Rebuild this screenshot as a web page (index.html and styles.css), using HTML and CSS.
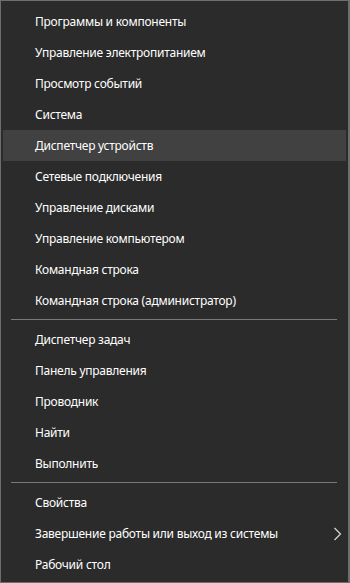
FILE: index.html
```html
<!DOCTYPE html>
<html lang="ru">
<head>
<meta charset="utf-8">
<link rel="stylesheet" href="styles.css">
</head>
<body>
<div class="menu">
  <div class="item">Программы и компоненты</div>
  <div class="item">Управление электропитанием</div>
  <div class="item">Просмотр событий</div>
  <div class="item">Система</div>
  <div class="item hover">Диспетчер устройств</div>
  <div class="item">Сетевые подключения</div>
  <div class="item">Управление дисками</div>
  <div class="item">Управление компьютером</div>
  <div class="item">Командная строка</div>
  <div class="item">Командная строка (администратор)</div>
  <div class="sep"><div class="line"></div></div>
  <div class="item">Диспетчер задач</div>
  <div class="item">Панель управления</div>
  <div class="item">Проводник</div>
  <div class="item">Найти</div>
  <div class="item">Выполнить</div>
  <div class="sep"><div class="line"></div></div>
  <div class="item">Свойства</div>
  <div class="item">Завершение работы или выход из системы
    <svg class="chev" width="9" height="14" viewBox="0 0 9 14"><path d="M1.5 1 L7.5 7 L1.5 13" fill="none" stroke="#d8d8d8" stroke-width="1.2"/></svg>
  </div>
  <div class="item">Рабочий стол</div>
</div>
</body>
</html>
```
FILE: styles.css
```css
html, body {
  margin: 0;
  padding: 0;
  background: #2b2b2b;
}
.menu {
  width: 350px;
  height: 583px;
  box-sizing: border-box;
  border: 1px solid #6e6e6e;
  border-right-width: 2px;
  background: #2b2b2b;
  padding: 5px 2px;
  font-family: "Noto Sans", "Open Sans", sans-serif;
  font-size: 12px;
  letter-spacing: -0.25px;
  color: #ffffff;
}
.item {
  height: 31px;
  display: flex;
  align-items: center;
  padding-left: 32px;
  padding-right: 4px;
  white-space: nowrap;
}
.item.hover {
  background: #414141;
}
.chev {
  margin-left: auto;
}
.sep {
  height: 8px;
  box-sizing: border-box;
  padding: 3px 9px 0 8px;
}
.line {
  height: 1px;
  background: #7a7a7a;
}
```
